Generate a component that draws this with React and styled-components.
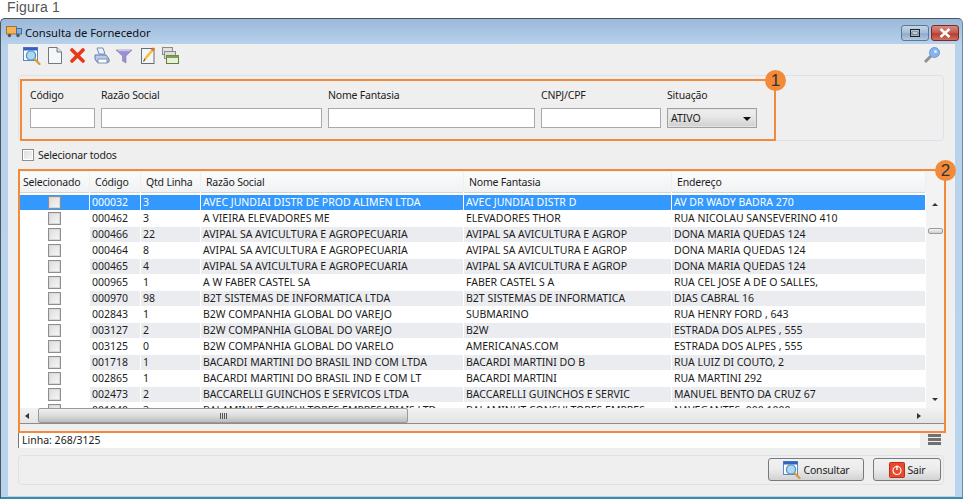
import styled, { createGlobalStyle } from "styled-components";

const rows = [
  ["000032", "3", "AVEC JUNDIAI DISTR DE PROD ALIMEN LTDA", "AVEC JUNDIAI DISTR D", "AV DR WADY BADRA 270"],
  ["000462", "3", "A VIEIRA ELEVADORES ME", "ELEVADORES THOR", "RUA NICOLAU SANSEVERINO 410"],
  ["000466", "22", "AVIPAL SA AVICULTURA E AGROPECUARIA", "AVIPAL SA AVICULTURA E AGROP", "DONA MARIA QUEDAS 124"],
  ["000464", "8", "AVIPAL SA AVICULTURA E AGROPECUARIA", "AVIPAL SA AVICULTURA E AGROP", "DONA MARIA QUEDAS 124"],
  ["000465", "4", "AVIPAL SA AVICULTURA E AGROPECUARIA", "AVIPAL SA AVICULTURA E AGROP", "DONA MARIA QUEDAS 124"],
  ["000965", "1", "A W FABER CASTEL SA", "FABER CASTEL S A", "RUA CEL JOSE A DE O SALLES,"],
  ["000970", "98", "B2T SISTEMAS DE INFORMATICA LTDA", "B2T SISTEMAS DE INFORMATICA", "DIAS CABRAL 16"],
  ["002843", "1", "B2W COMPANHIA GLOBAL DO VAREJO", "SUBMARINO", "RUA HENRY FORD , 643"],
  ["003127", "2", "B2W COMPANHIA GLOBAL DO VAREJO", "B2W", "ESTRADA DOS ALPES , 555"],
  ["003125", "0", "B2W COMPANHIA GLOBAL DO VARELO", "AMERICANAS.COM", "ESTRADA DOS ALPES , 555"],
  ["001718", "1", "BACARDI MARTINI DO BRASIL IND COM LTDA", "BACARDI MARTINI DO B", "RUA LUIZ DI COUTO, 2"],
  ["002865", "1", "BACARDI MARTINI DO BRASIL IND E COM LT", "BACARDI MARTINI", "RUA MARTINI 292"],
  ["002473", "2", "BACCARELLI GUINCHOS E SERVICOS LTDA", "BACCARELLI GUINCHOS E SERVIC", "MANUEL BENTO DA CRUZ 67"],
  ["001040", "3", "BALAMINUT CONSULTORES EMPRESARIAIS LTD", "BALAMINUT CONSULTORES EMPRES", "NAVEGANTES, 000 1000"],
];

const COLUMNS = "70px 51px 60px 263px 208px 1fr";

const GlobalStyle = createGlobalStyle`
  html, body {
    margin: 0;
    background: #fff;
    font-family: "Noto Sans", "DejaVu Sans", sans-serif;
    font-size: 10.5px;
    color: #1c1c1c;
  }
`;

const Page = styled.div`
  width: 963px;
  height: 499px;
  overflow: hidden;
`;

const Caption = styled.div`
  height: 18px;
  padding-left: 7px;
  font: 14px/14px "Liberation Sans", sans-serif;
  letter-spacing: 0.2px;
  color: #555;
`;

const Win = styled.div`
  height: 481px;
  box-sizing: border-box;
  display: flex;
  flex-direction: column;
  border: 1px solid #4a5560;
  border-bottom: 2px solid #3b8ca8;
  border-right-color: #6e8aa0;
  border-radius: 5px 5px 0 0;
  background: linear-gradient(#9bb8d8 0, #b8d2ec 26px, #b9d4ee 100%);
`;

const TitleBar = styled.div`
  height: 25px;
  flex: none;
  display: flex;
  align-items: center;
  padding: 0 3px 0 5px;
  gap: 3px;
  font-size: 11.2px;
  color: #101010;
`;

const TitleText = styled.span`
  flex: 1;
  padding-top: 1px;
`;

const WinBtn = styled.div`
  width: ${(p) => p.$w}px;
  height: 16px;
  align-self: flex-start;
  margin-top: 6px;
  margin-left: -1px;
  box-sizing: border-box;
  display: flex;
  align-items: center;
  justify-content: center;
  border: 1px solid ${(p) => (p.$close ? "#7c2a22" : "#5f7892")};
  border-radius: 3px;
  background: ${(p) =>
    p.$close
      ? "linear-gradient(#d98b7f, #c2584b 50%, #b53d30 55%, #cf7060)"
      : "linear-gradient(#c3d6ea, #a4bdd8 50%, #8eabcb 55%, #b2c9e2)"};
`;

const Content = styled.div`
  flex: 1;
  margin: 0 7px 1px 7px;
  background: #efefef;
  display: flex;
  flex-direction: column;
  padding: 0 11px 0 10px;
`;

const Toolbar = styled.div`
  height: 31px;
  flex: none;
  box-sizing: border-box;
  display: flex;
  align-items: flex-start;
  padding: 3px 4px 0 5px;
`;

const ToolIcon = styled.svg`
  flex: none;
  margin-left: ${(p) => p.$gap || 0}px;
`;

const KeyIcon = styled.svg`
  flex: none;
  margin-left: auto;
`;

const GroupBox = styled.div`
  flex: none;
  height: 66px;
  box-sizing: border-box;
  border: 1px solid #dbe2ea;
  border-radius: 4px;
  padding: 3px 0 0 1px;
`;

const Annotated = styled.div`
  position: relative;
  box-sizing: border-box;
  border: 2px solid #f28a3a;
`;

const FilterBox = styled(Annotated)`
  width: 756px;
  height: 62px;
  display: flex;
  gap: 6px;
  padding: 7px 0 0 8px;
`;

const Badge = styled.div`
  position: absolute;
  top: -11px;
  right: -12px;
  width: 21px;
  height: 21px;
  border-radius: 50%;
  background: #f28a3a;
  color: #333;
  font: 17px/21px "Liberation Sans", sans-serif;
  text-align: center;
`;

const Field = styled.div`
  width: ${(p) => p.$w}px;
  display: flex;
  flex-direction: column;
  gap: 5px;
`;

const Label = styled.label`
  height: 15px;
  line-height: 15px;
  letter-spacing: -0.2px;
  white-space: nowrap;
`;

const Input = styled.div`
  height: 20px;
  box-sizing: border-box;
  background: #fff;
  border: 1px solid #a9a9a9;
`;

const Select = styled.div`
  height: 20px;
  box-sizing: border-box;
  display: flex;
  align-items: center;
  justify-content: space-between;
  padding: 0 5px 0 3px;
  border: 1px solid #a0a0a0;
  box-shadow: inset 0 0 0 1px #e4e4e4;
  background: linear-gradient(#efefef, #e6e6e6 45%, #cfcfcf);
`;

const Arrow = styled.span`
  width: 0;
  height: 0;
  border-left: 4px solid transparent;
  border-right: 4px solid transparent;
  border-top: 4px solid #111;
  margin-top: 2px;
`;

const CheckRow = styled.div`
  height: 28px;
  flex: none;
  display: flex;
  align-items: center;
  gap: 4px;
  padding: 0 0 0 4px;
  letter-spacing: -0.2px;
`;

const Check = styled.span`
  width: 12px;
  height: 12px;
  flex: none;
  box-sizing: border-box;
  border: 1px solid #8e8e8e;
  box-shadow: inset 0 0 0 1px #fff;
  background: linear-gradient(135deg, #dcdcdc, #f7f7f7);
`;

const GridBox = styled(Annotated)`
  height: 264px;
  flex: none;
  width: 928px;
  display: flex;
  flex-direction: column;
  background: #efefef;
`;

const GridMain = styled.div`
  display: flex;
  height: 236px;
  flex: none;
  margin-top: 1px;
`;

const GridTable = styled.div`
  width: 906px;
  flex: none;
  overflow: hidden;
  background: #fff;
`;

const HeaderRow = styled.div`
  display: grid;
  grid-template-columns: ${COLUMNS};
  height: 20px;
  margin-bottom: 3px;
  background: #efefef;
`;

const HeaderCell = styled.div`
  box-sizing: border-box;
  margin-right: 1px;
  padding-left: ${(p) => p.$pad ?? 5}px;
  line-height: 20px;
  letter-spacing: -0.2px;
  white-space: nowrap;
  border-bottom: 1px solid #d4d4d4;
  background: linear-gradient(#fbfbfb, #f1f2f4);
`;

const Row = styled.div`
  display: grid;
  grid-template-columns: ${COLUMNS};
  height: 15px;
  margin-bottom: 1px;
  color: ${(p) => (p.$selected ? "#fff" : "#1c1c1c")};
`;

const Cell = styled.div`
  margin-right: 1px;
  padding-left: 2px;
  line-height: 15px;
  white-space: nowrap;
  overflow: hidden;
  background: ${(p) => (p.$selected ? "#3399ff" : p.$alt ? "#ebecf0" : "#fff")};
`;

const CheckCell = styled.div`
  display: flex;
  align-items: center;
  justify-content: center;
  margin-right: 1px;
  background: ${(p) => (p.$selected ? "#3399ff" : "#fff")};
`;

const RowCheck = styled(Check)`
  width: 13px;
  height: 13px;
  box-shadow: inset 0 0 0 1px #d8d8d8;
`;

const VScroll = styled.div`
  flex: 1;
  position: relative;
  background: #f3f3f3;
`;

const Thumb = styled.div`
  position: absolute;
  top: 56px;
  left: 2px;
  width: 13px;
  height: 4px;
  border: 1px solid #9a9a9a;
  border-radius: 2px;
  background: linear-gradient(#f4f4f4, #cfcfcf);
`;

const ScrollArrow = styled.span`
  position: absolute;
  left: 6px;
  top: ${(p) => (p.$down ? "226px" : "31px")};
  width: 0;
  height: 0;
  border-left: 3px solid transparent;
  border-right: 3px solid transparent;
  ${(p) => (p.$down ? "border-top: 3px solid #333;" : "border-bottom: 3px solid #333;")}
`;

const HScroll = styled.div`
  height: 16px;
  flex: none;
  display: flex;
  align-items: center;
  box-sizing: border-box;
  padding: 0 0 0 17px;
  border-bottom: 1px solid #8c8c8c;
  background: linear-gradient(#f2f2f2, #e4e4e4);
`;

const HThumb = styled.div`
  width: 370px;
  height: 15px;
  box-sizing: border-box;
  display: flex;
  align-items: center;
  justify-content: center;
  gap: 1px;
  border: 1px solid #9a9a9a;
  border-radius: 2px;
  background: linear-gradient(#f0f0f0, #dcdcdc 50%, #bdbdbd);
`;

const Grip = styled.i`
  width: 1px;
  height: 6px;
  background: #555;
`;

const HArrow = styled.span`
  width: 0;
  height: 0;
  border-top: 3px solid transparent;
  border-bottom: 3px solid transparent;
  ${(p) =>
    p.$right
      ? "border-left: 4px solid #333; margin-left: 509px;"
      : "border-right: 4px solid #333; margin-left: -12px; margin-right: 9px;"}
`;

const StatusRow = styled.div`
  height: 15px;
  flex: none;
  display: flex;
  align-items: flex-start;
  border-left: 1px solid #777;
`;

const StatusText = styled.div`
  width: 901px;
  height: 15px;
  line-height: 15px;
  padding-left: 3px;
  box-sizing: border-box;
  background: #fff;
`;

const MenuBars = styled.div`
  margin: 1px 0 0 8px;
  width: 13px;
  height: 11px;
  display: flex;
  flex-direction: column;
  justify-content: space-between;
`;

const MenuBar = styled.i`
  height: 3px;
  background: #707070;
`;

const FooterBox = styled.div`
  margin-top: 7px;
  height: 30px;
  flex: none;
  box-sizing: border-box;
  display: flex;
  justify-content: flex-end;
  align-items: flex-start;
  gap: 9px;
  padding: 2px 2px 0 0;
  border: 1px solid #dbe2ea;
  border-radius: 4px;
`;

const Button = styled.div`
  width: ${(p) => p.$w}px;
  height: 23px;
  box-sizing: border-box;
  display: flex;
  align-items: center;
  justify-content: center;
  gap: 3px;
  letter-spacing: -0.2px;
  border: 1px solid #7a7a7a;
  border-radius: 3px;
  background: linear-gradient(#f2f2f2, #ebebeb 50%, #d2d2d2);
`;

const TruckIcon = () => (
  <svg width="16" height="13" viewBox="0 0 16 13">
    <rect x="0.5" y="1.5" width="10" height="7.5" fill="#f2b35a" stroke="#a9722c" />
    <rect x="10.5" y="3.5" width="5" height="5.5" fill="#7fb2e0" stroke="#3f6f9f" />
    <circle cx="3.5" cy="10.5" r="1.7" fill="#555" />
    <circle cx="12" cy="10.5" r="1.7" fill="#555" />
  </svg>
);

const SearchIcon = ({ size = 18 }) => (
  <ToolIcon width={size} height={size} viewBox="0 0 18 18">
    <rect x="0.5" y="0.5" width="14" height="13" fill="#fff" stroke="#5b86c8" />
    <rect x="0.5" y="0.5" width="14" height="3" fill="#2f62c4" />
    <circle cx="8" cy="8.5" r="4.6" fill="#a9d8f5" stroke="#5b8fb8" strokeWidth="1.3" />
    <path d="M11.5 12 L16.5 17" stroke="#d99a3f" strokeWidth="2.2" strokeLinecap="round" />
  </ToolIcon>
);

const PageIcon = () => (
  <ToolIcon $gap={7} width="14" height="17" viewBox="0 0 14 17">
    <path d="M0.5 0.5 H9 L13.5 5 V16.5 H0.5 Z" fill="#f4f6f8" stroke="#6c7a88" />
    <path d="M9 0.5 V5 H13.5" fill="#d8dee4" stroke="#6c7a88" />
  </ToolIcon>
);

const DeleteIcon = () => (
  <ToolIcon $gap={8} width="15" height="17" viewBox="0 0 15 17">
    <path d="M2 3 L13 14 M13 3 L2 14" stroke="#e8381a" strokeWidth="3.6" strokeLinecap="round" />
  </ToolIcon>
);

const PrinterIcon = () => (
  <ToolIcon $gap={9} width="16" height="17" viewBox="0 0 16 17">
    <path d="M3 1 H9 L11 7 H5 Z" fill="#eef3fa" stroke="#6f8fc0" />
    <path d="M1 8 H12 L15 12 V15 H3 L1 12 Z" fill="#b9cdea" stroke="#6078a8" />
    <rect x="4" y="12" width="9" height="4" fill="#fff" stroke="#7a90b8" />
  </ToolIcon>
);

const FunnelIcon = () => (
  <ToolIcon $gap={6} width="16" height="17" viewBox="0 0 16 17">
    <path d="M0 3 H16 L10 9 V16 L6.5 14 V9 Z" fill="#9a8fd0" stroke="#8378bb" strokeWidth="0.6" />
    <path d="M2 3.5 H14" stroke="#c9c3ea" strokeWidth="1.4" />
  </ToolIcon>
);

const NoteIcon = () => (
  <ToolIcon $gap={9} width="15" height="17" viewBox="0 0 15 17">
    <rect x="0.5" y="1.5" width="12.5" height="15" fill="#f5f5f2" stroke="#5f6f7c" />
    <path d="M3.5 12.5 L11.5 3" stroke="#f0c24a" strokeWidth="2.6" />
    <path d="M11 3.5 L13 1" stroke="#e8702a" strokeWidth="2.6" />
    <path d="M2.5 14.5 L4 12" stroke="#555" strokeWidth="1.2" />
  </ToolIcon>
);

const StackIcon = () => (
  <ToolIcon $gap={6} width="17" height="17" viewBox="0 0 17 17">
    <rect x="0.5" y="0.5" width="10" height="7" fill="#e2e2e2" stroke="#8a8a8a" />
    <rect x="2.5" y="4.5" width="11" height="7" fill="#dcdcdc" stroke="#8a8a8a" />
    <rect x="4.5" y="8.5" width="12" height="8" fill="#e8f0d8" stroke="#5f7f3a" />
    <rect x="4.5" y="8.5" width="12" height="2.5" fill="#7f9f50" />
  </ToolIcon>
);

const Key = () => (
  <KeyIcon width="17" height="17" viewBox="0 0 17 17">
    <path d="M9 8 L2 15" stroke="#8b9298" strokeWidth="3" />
    <circle cx="11.5" cy="5.5" r="5" fill="#86b4ee" stroke="#6c9ad8" />
    <circle cx="12.5" cy="4.5" r="1.5" fill="#dcebff" />
  </KeyIcon>
);

const PowerIcon = () => (
  <svg width="16" height="16" viewBox="0 0 16 16">
    <rect x="0.5" y="0.5" width="15" height="15" rx="1" fill="#e8482c" stroke="#b8301a" />
    <circle cx="8" cy="8.5" r="4" fill="none" stroke="#fff" strokeWidth="1.2" />
    <path d="M8 3.5 V8" stroke="#fff" strokeWidth="1.4" />
  </svg>
);

const App = () => {
  return (
    <Page>
      <GlobalStyle />
      <Caption>Figura 1</Caption>
      <Win>
        <TitleBar>
          <TruckIcon />
          <TitleText>Consulta de Fornecedor</TitleText>
          <WinBtn $w={28}>
            <svg width="10" height="8" viewBox="0 0 10 8">
              <rect x="0.5" y="0.5" width="9" height="7" fill="none" stroke="#222" />
              <rect x="2" y="3" width="6" height="2" fill="#fff" stroke="#222" strokeWidth="0.5" />
            </svg>
          </WinBtn>
          <WinBtn $close $w={28}>
            <svg width="12" height="10" viewBox="0 0 12 10">
              <path d="M1.5 1 L10.5 9 M10.5 1 L1.5 9" stroke="#fff" strokeWidth="2.4" />
            </svg>
          </WinBtn>
        </TitleBar>
        <Content>
          <Toolbar>
            <SearchIcon />
            <PageIcon />
            <DeleteIcon />
            <PrinterIcon />
            <FunnelIcon />
            <NoteIcon />
            <StackIcon />
            <Key />
          </Toolbar>
          <GroupBox>
            <FilterBox>
              <Field $w={65}>
                <Label>Código</Label>
                <Input />
              </Field>
              <Field $w={221}>
                <Label>Razão Social</Label>
                <Input />
              </Field>
              <Field $w={207}>
                <Label>Nome Fantasia</Label>
                <Input />
              </Field>
              <Field $w={120}>
                <Label>CNPJ/CPF</Label>
                <Input />
              </Field>
              <Field $w={90}>
                <Label>Situação</Label>
                <Select>
                  ATIVO
                  <Arrow />
                </Select>
              </Field>
              <Badge>1</Badge>
            </FilterBox>
          </GroupBox>
          <CheckRow>
            <Check />
            Selecionar todos
          </CheckRow>
          <GridBox>
            <GridMain>
              <GridTable>
                <HeaderRow>
                  <HeaderCell $pad={3}>Selecionado</HeaderCell>
                  <HeaderCell>Código</HeaderCell>
                  <HeaderCell>Qtd Linha</HeaderCell>
                  <HeaderCell>Razão Social</HeaderCell>
                  <HeaderCell>Nome Fantasia</HeaderCell>
                  <HeaderCell>Endereço</HeaderCell>
                </HeaderRow>
                {rows.map((row, i) => (
                  <Row key={row[0]} $selected={i === 0}>
                    <CheckCell $selected={i === 0}>
                      <RowCheck />
                    </CheckCell>
                    {row.map((text, j) => (
                      <Cell key={j} $selected={i === 0} $alt={i % 2 === 0}>
                        {text}
                      </Cell>
                    ))}
                  </Row>
                ))}
              </GridTable>
              <VScroll>
                <ScrollArrow />
                <Thumb />
                <ScrollArrow $down />
              </VScroll>
            </GridMain>
            <HScroll>
              <HArrow />
              <HThumb>
                <Grip />
                <Grip />
                <Grip />
                <Grip />
              </HThumb>
              <HArrow $right />
            </HScroll>
            <Badge>2</Badge>
          </GridBox>
          <StatusRow>
            <StatusText>Linha: 268/3125</StatusText>
            <MenuBars>
              <MenuBar />
              <MenuBar />
              <MenuBar />
            </MenuBars>
          </StatusRow>
          <FooterBox>
            <Button $w={96}>
              <SearchIcon />
              Consultar
            </Button>
            <Button $w={68}>
              <PowerIcon />
              Sair
            </Button>
          </FooterBox>
        </Content>
      </Win>
    </Page>
  );
};

export default App;
